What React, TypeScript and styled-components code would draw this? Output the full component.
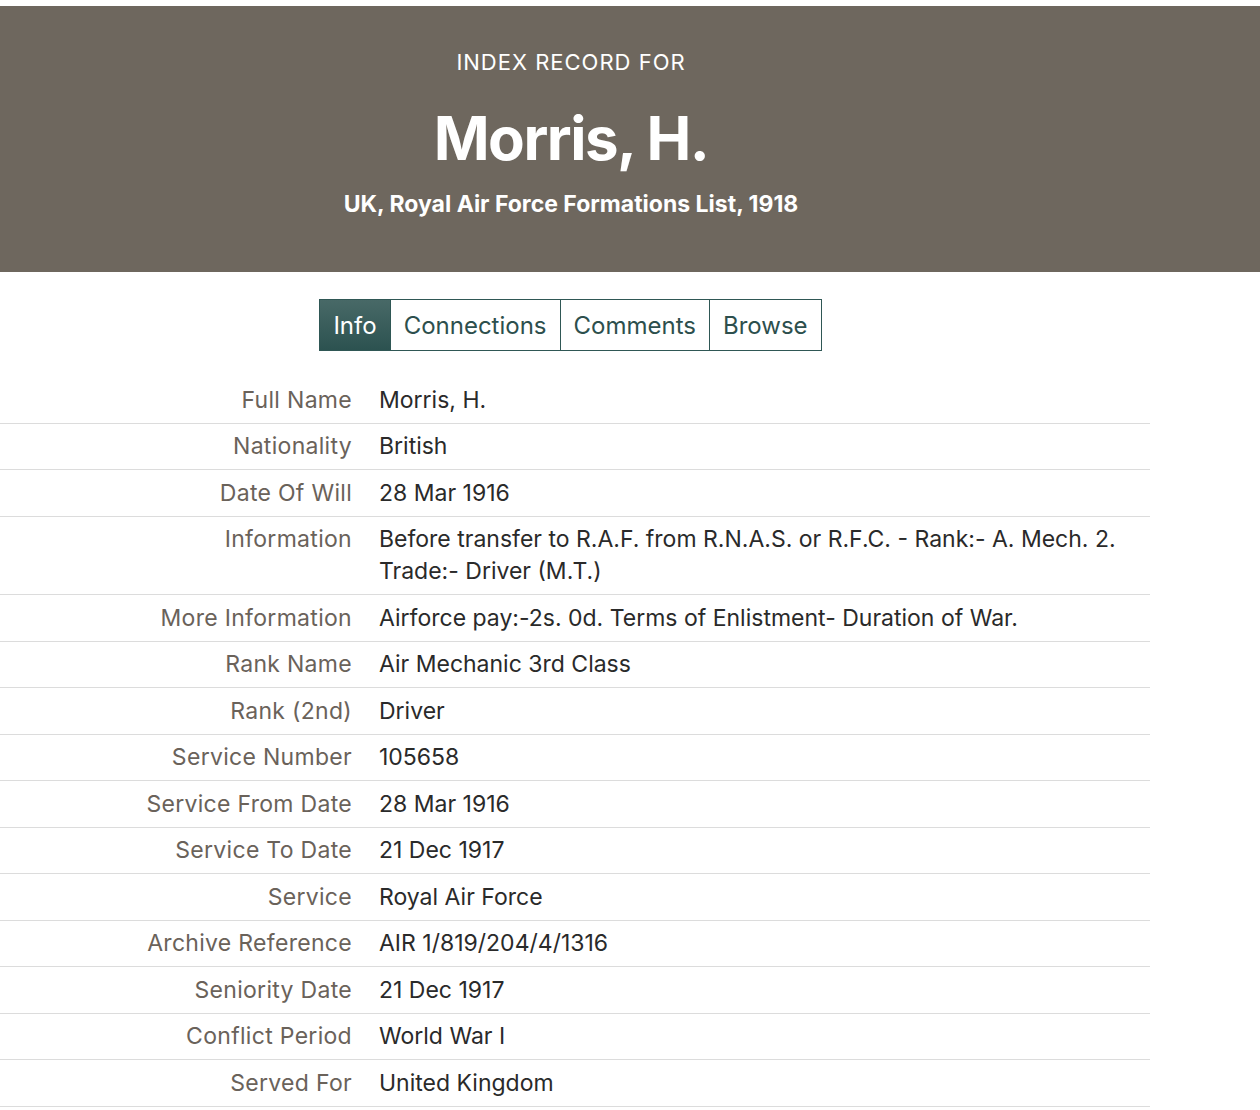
import React from "react";
import styled, { createGlobalStyle } from "styled-components";

const GlobalStyle = createGlobalStyle`
  body {
    margin: 0;
    padding-top: 6px;
    background: #fff;
    font-family: Inter, "Liberation Sans", Arial, sans-serif;
  }
`;

const rows: [string, string][] = [
  ["Full Name", "Morris, H."],
  ["Nationality", "British"],
  ["Date Of Will", "28 Mar 1916"],
  [
    "Information",
    "Before transfer to R.A.F. from R.N.A.S. or R.F.C. - Rank:- A. Mech. 2. Trade:- Driver (M.T.)",
  ],
  ["More Information", "Airforce pay:-2s. 0d. Terms of Enlistment- Duration of War."],
  ["Rank Name", "Air Mechanic 3rd Class"],
  ["Rank (2nd)", "Driver"],
  ["Service Number", "105658"],
  ["Service From Date", "28 Mar 1916"],
  ["Service To Date", "21 Dec 1917"],
  ["Service", "Royal Air Force"],
  ["Archive Reference", "AIR 1/819/204/4/1316"],
  ["Seniority Date", "21 Dec 1917"],
  ["Conflict Period", "World War I"],
  ["Served For", "United Kingdom"],
];

const tabs = ["Info", "Connections", "Comments", "Browse"];

const App = () => {
  return (
    <>
      <GlobalStyle />
      <Banner>
        <Kicker>INDEX RECORD FOR</Kicker>
        <Title>Morris, H.</Title>
        <Collection>UK, Royal Air Force Formations List, 1918</Collection>
      </Banner>
      <TabBar>
        {tabs.map((t, i) => (
          <Tab key={t} $active={i === 0}>
            {t}
          </Tab>
        ))}
      </TabBar>
      <Table>
        {rows.map(([label, value]) => (
          <Row key={label}>
            <Label>{label}</Label>
            <Value>{value}</Value>
          </Row>
        ))}
      </Table>
    </>
  );
};

const Banner = styled.header`
  background: #6e675e;
  height: 266px;
  box-sizing: border-box;
  padding-top: 43px;
  display: flex;
  flex-direction: column;
  align-items: center;
  color: #fff;
  padding-right: 118px;
`;

const Kicker = styled.div`
  font-size: 22px;
  line-height: 26px;
  letter-spacing: 1px;
`;

const Title = styled.h1`
  margin: 27px 0 0;
  font-size: 60px;
  line-height: 72px;
  font-weight: 700;
  letter-spacing: -1.5px;
`;

const Collection = styled.div`
  margin-top: 17px;
  font-size: 23px;
  line-height: 26px;
  font-weight: 700;
`;

const TabBar = styled.nav`
  display: flex;
  justify-content: center;
  margin: 27px 0 0;
  padding-right: 118px;
`;

const Tab = styled.button<{ $active?: boolean }>`
  font-family: inherit;
  font-size: 24px;
  height: 52px;
  padding: 0 13px;
  border: 1px solid #2f5755;
  margin-left: -1px;
  background: ${(p) =>
    p.$active ? "linear-gradient(180deg, #486967 0%, #2c5250 100%)" : "#fff"};
  color: ${(p) => (p.$active ? "#fff" : "#2d4f4d")};
  cursor: pointer;
`;

const Table = styled.section`
  width: 1150px;
  margin-top: 26px;
`;

const Row = styled.div`
  display: grid;
  grid-template-columns: 352px 1fr;
  column-gap: 27px;
  padding: 6.75px 0;
  border-bottom: 1px solid #dcdcdc;
  font-size: 23px;
  line-height: 32px;
`;

const Label = styled.div`
  text-align: right;
  color: #6a625a;
  letter-spacing: 0.3px;
`;

const Value = styled.div`
  color: #2a2a2a;
  padding-right: 30px;
`;

export default App;
